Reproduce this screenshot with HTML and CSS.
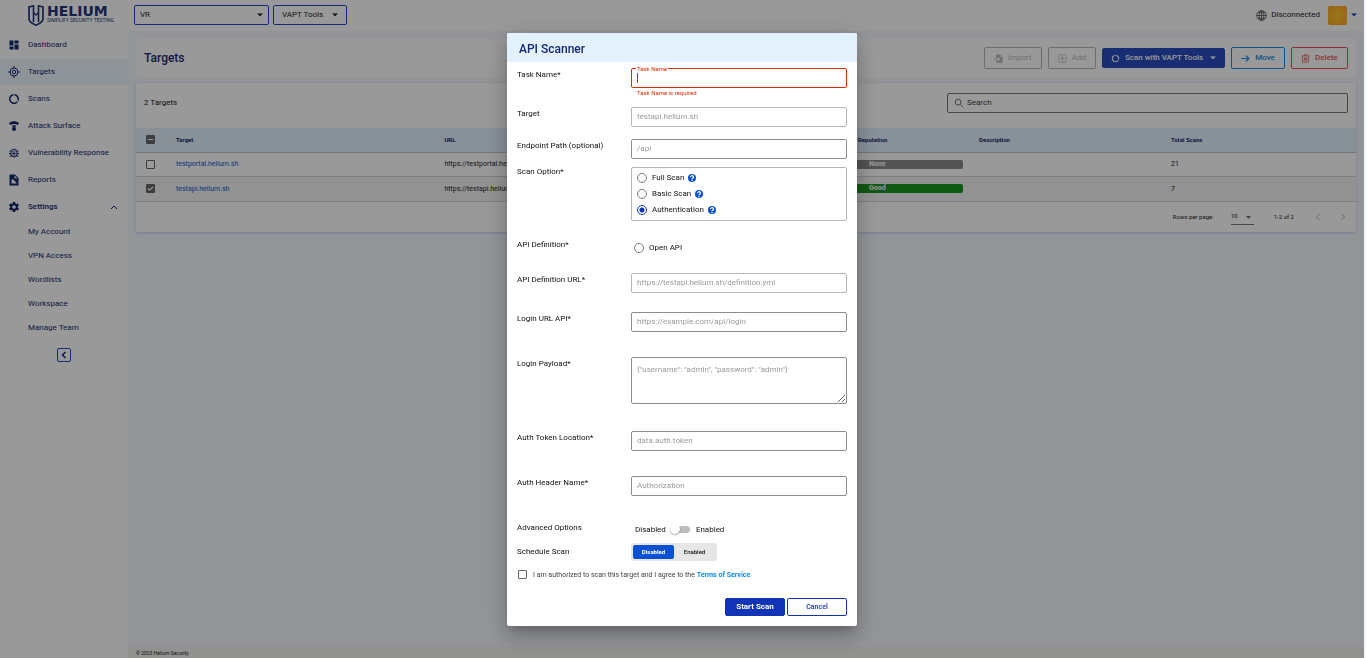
FILE: index.html
```html
<!DOCTYPE html>
<html lang="en">
<head>
<meta charset="utf-8">
<title>Helium - Targets</title>
<link rel="stylesheet" href="styles.css">
</head>
<body>
<svg class="defs" aria-hidden="true">
  <symbol id="i-ring" viewBox="0 0 24 24"><path fill="currentColor" d="M13 2.05v3.03c3.39.49 6 3.39 6 6.92 0 .9-.18 1.75-.48 2.54l2.6 1.53c.56-1.24.88-2.62.88-4.07 0-5.18-3.95-9.45-9-9.95zM12 19c-3.87 0-7-3.13-7-7 0-3.53 2.61-6.43 6-6.92V2.05c-5.06.5-9 4.76-9 9.95 0 5.52 4.47 10 9.99 10 3.31 0 6.24-1.61 8.06-4.09l-2.6-1.53C16.17 17.98 14.21 19 12 19z"/></symbol>
  <symbol id="i-down" viewBox="0 0 10 6"><path fill="currentColor" d="M0 0h10L5 5.500z"/></symbol>
  <symbol id="i-help" viewBox="0 0 24 24"><circle cx="12" cy="12" r="12" fill="#0a50d2"/><path d="M7.500 9.500a4.500 4 0 1 1 6.500 3.300c-1.300.8-2 1.200-2 2.700" fill="none" stroke="#fff" stroke-width="3.600"/><circle cx="12" cy="19.500" r="2.100" fill="#fff"/></symbol>
</svg>

<div class="app">
  <aside class="sidebar">
    <a class="logo" href="#">
      <svg class="logo-mark" viewBox="0 0 16 22" fill="none" stroke="currentColor"><path stroke-width="1.700" d="M5 2 1 3v12c0 2.500 3 4.500 7 6.200 4-1.700 7-3.700 7-6.200V3l-4-1"/><path stroke-width="1.600" d="M5.500 1v17M10.500 1v17"/><path stroke-width="1.400" d="M5.500 8.500 8 11l2.500-2.500"/></svg>
      <span class="logo-text"><span class="logo-name">HELIUM</span><span class="logo-tag">SIMPLIFY SECURITY TESTING</span></span>
    </a>
    <nav class="nav">
      <a href="#"><svg viewBox="0 0 24 24"><path fill="currentColor" d="M3 13h8V3H3v10zm0 8h8v-6H3v6zm10 0h8V11h-8v10zm0-18v6h8V3h-8z"/></svg>Dashboard</a>
      <a href="#" class="active"><svg viewBox="0 0 24 24" fill="none" stroke="currentColor" stroke-width="2"><circle cx="12" cy="12" r="8"/><circle cx="12" cy="12" r="3.500"/><path d="M12 0v4M12 20v4M0 12h4M20 12h4"/></svg>Targets</a>
      <a href="#"><svg viewBox="0 0 24 24"><use href="#i-ring"/></svg>Scans</a>
      <a href="#"><svg viewBox="0 0 24 24"><path fill="currentColor" d="M2 6c6-5 14-5 20 0l-2.500 4c-4.500-3-10.500-3-15 0zM7.500 11.500c3-1.500 6-1.500 9 0L14 15h-4z"/><circle cx="12" cy="18" r="4" fill="currentColor"/></svg>Attack Surface</a>
      <a href="#"><svg viewBox="0 0 24 24" fill="none" stroke="currentColor" stroke-width="2"><rect x="6" y="5" width="12" height="15" rx="6"/><path d="M3 8h3M2 13h4M3 18h4M18 8h3M18 13h4M17 18h4M9 10h6M9 13h6M9 16h6M8 3l2 2M16 3l-2 2"/></svg>Vulnerability Response</a>
      <a href="#"><svg viewBox="0 0 24 24"><path fill="currentColor" fill-rule="evenodd" d="M3 1h11l7 7v15H3zM13 3v6h6zM7 11v8h10v-2h-2v-3h-3v-3z"/></svg>Reports</a>
      <a href="#" class="open"><svg viewBox="0 0 24 24"><path fill="currentColor" d="M19.430 12.980c.04-.32.07-.64.07-.98s-.03-.66-.07-.98l2.110-1.650c.19-.15.24-.42.12-.64l-2-3.460c-.12-.22-.39-.3-.61-.22l-2.490 1c-.52-.4-1.080-.73-1.690-.98l-.38-2.650C14.460 2.180 14.250 2 14 2h-4c-.25 0-.46.18-.49.42l-.38 2.650c-.61.25-1.170.59-1.690.98l-2.490-1c-.23-.09-.49 0-.61.22l-2 3.460c-.13.22-.07.49.12.64l2.110 1.650c-.04.32-.07.65-.07.98s.03.66.07.98l-2.110 1.650c-.19.15-.24.42-.12.64l2 3.460c.12.22.39.3.61.22l2.490-1c.52.4 1.080.73 1.690.98l.38 2.650c.03.24.24.42.49.42h4c.25 0 .46-.18.49-.42l.38-2.650c.61-.25 1.170-.59 1.690-.98l2.490 1c.23.09.49 0 .61-.22l2-3.460c.12-.22.07-.49-.12-.64l-2.110-1.650zM12 15.500c-1.930 0-3.500-1.570-3.500-3.500s1.570-3.500 3.500-3.500 3.500 1.570 3.500 3.500-1.570 3.500-3.500 3.500z"/></svg>Settings<svg class="chev" viewBox="0 0 8 8"><path d="m1 6 3-3 3 3" fill="none" stroke="currentColor"/></svg></a>
      <div class="subnav">
        <a href="#">My Account</a><a href="#">VPN Access</a><a href="#">Wordlists</a><a href="#">Workspace</a><a href="#">Manage Team</a>
      </div>
    </nav>
    <button class="collapse" aria-label="Collapse menu"><svg viewBox="0 0 8 8"><path d="M5.500 1 2.500 4l3 3" fill="none" stroke="currentColor" stroke-width="1.500"/></svg></button>
  </aside>

  <div class="main">
    <header class="topbar">
      <div class="select-wrap"><select aria-label="Workspace"><option>VR</option></select><svg class="caret" viewBox="0 0 10 6"><use href="#i-down"/></svg></div>
      <button class="tools">VAPT Tools<svg class="caret" viewBox="0 0 10 6"><use href="#i-down"/></svg></button>
      <div class="account">
        <svg class="globe" viewBox="0 0 24 24" fill="none" stroke="currentColor" stroke-width="1.800"><circle cx="12" cy="12" r="10.500"/><ellipse cx="12" cy="12" rx="5" ry="10.500"/><path d="M12 1v22M1 12h22M3 6h18M3 18h18"/></svg>
        <span>Disconnected</span><span class="avatar"></span><svg class="caret blue" viewBox="0 0 10 6"><use href="#i-down"/></svg>
      </div>
    </header>

    <main class="content">
      <section class="title-card">
        <h1>Targets</h1>
        <button class="btn muted" disabled><svg viewBox="0 0 24 24"><path fill="currentColor" fill-rule="evenodd" d="M6 1h11l6 6v16H6v-7h5v4l6-6-6-6v4H6zM1 12h5v4H1zM16 3v5h5z"/></svg>Import</button>
        <button class="btn muted" disabled><svg viewBox="0 0 24 24" fill="none" stroke="currentColor" stroke-width="2"><rect x="2" y="2" width="20" height="20" rx="2"/><path d="M12 6v12M6 12h12"/></svg>Add</button>
        <button class="btn solid"><svg viewBox="0 0 24 24"><use href="#i-ring"/></svg>Scan with VAPT Tools<svg class="caret" viewBox="0 0 10 6"><use href="#i-down"/></svg></button>
        <button class="btn move"><svg viewBox="0 0 24 24" fill="none" stroke="currentColor" stroke-width="3"><path d="M1 12h20M13 4l8 8-8 8"/></svg>Move</button>
        <button class="btn delete"><svg viewBox="0 0 24 24" fill="none" stroke="currentColor" stroke-width="2"><path d="M2 5h20M8 4V2h8v2M4 5v17h16V5M9 9v9M12 9v9M15 9v9"/></svg>Delete</button>
      </section>

      <section class="table-card">
        <div class="table-head">
          <span>2 Targets</span>
          <label class="search"><svg viewBox="0 0 12 12" fill="none" stroke="currentColor"><circle cx="5" cy="5" r="3.500"/><path d="m8 8 3 3"/></svg><input type="text" placeholder="Search" aria-label="Search"></label>
        </div>
        <table>
          <colgroup><col class="c-check"><col class="c-target"><col class="c-url"><col class="c-rep"><col class="c-desc"><col class="c-total"></colgroup>
          <thead><tr><th><input type="checkbox" class="check mixed" aria-label="Select all"></th><th>Target</th><th>URL</th><th>Reputation</th><th>Description</th><th>Total Scans</th></tr></thead>
          <tbody>
            <tr><td><input type="checkbox" class="check" aria-label="Select testportal.helium.sh"></td><td><a href="#">testportal.helium.sh</a></td><td>https://testportal.helium.sh</td><td><span class="rep none">None</span></td><td></td><td>21</td></tr>
            <tr class="picked"><td><input type="checkbox" class="check" checked aria-label="Select testapi.helium.sh"></td><td><a href="#">testapi.helium.sh</a></td><td>https://testapi.helium.sh</td><td><span class="rep good">Good</span></td><td></td><td>7</td></tr>
          </tbody>
        </table>
        <div class="pager">
          <label for="rows">Rows per page:</label>
          <div class="rows"><select id="rows"><option>10</option></select><svg class="caret" viewBox="0 0 10 6"><use href="#i-down"/></svg></div>
          <span class="range">1-2 of 2</span>
          <button disabled aria-label="Previous page"><svg viewBox="0 0 8 8"><path d="M5.500 1 2.500 4l3 3" fill="none" stroke="currentColor"/></svg></button>
          <button disabled aria-label="Next page"><svg viewBox="0 0 8 8"><path d="m2.500 1 3 3-3 3" fill="none" stroke="currentColor"/></svg></button>
        </div>
      </section>
    </main>
    <footer class="footer">© 2023 Helium Security</footer>
  </div>
</div>

<div class="backdrop">
  <form class="modal" role="dialog" aria-labelledby="dlg-title">
    <h2 id="dlg-title">API Scanner</h2>
    <div class="fields">
      <div class="row error"><label class="name" for="task">Task Name*</label>
        <div class="outlined"><input id="task" class="field" type="text"><span class="float">Task Name</span><span class="cursor"></span><span class="hint">Task Name is required</span></div></div>
      <div class="row tight"><label class="name" for="target">Target</label><input id="target" class="field light" type="text" placeholder="testapi.helium.sh"></div>
      <div class="row snug"><label class="name" for="path">Endpoint Path (optional)</label><input id="path" class="field" type="text" placeholder="/api"></div>
      <div class="row options"><span class="name">Scan Option*</span>
        <div class="radio-box">
          <label><input type="radio" name="scan">Full Scan<svg viewBox="0 0 24 24"><use href="#i-help"/></svg></label>
          <label><input type="radio" name="scan">Basic Scan<svg viewBox="0 0 24 24"><use href="#i-help"/></svg></label>
          <label><input type="radio" name="scan" checked>Authentication<svg viewBox="0 0 24 24"><use href="#i-help"/></svg></label>
        </div></div>
      <div class="row"><span class="name">API Definition*</span><label class="single"><input type="radio" name="def">Open API</label></div>
      <div class="row"><label class="name" for="defurl">API Definition URL*</label><input id="defurl" class="field light" type="text" placeholder="https://testapi.helium.sh/definition.yml"></div>
      <div class="row roomy"><label class="name" for="login">Login URL API*</label><input id="login" class="field" type="text" placeholder="https://example.com/api/login"></div>
      <div class="row payload"><label class="name" for="payload">Login Payload*</label><textarea id="payload" class="field" placeholder="{&quot;username&quot;: &quot;admin&quot;, &quot;password&quot;: &quot;admin&quot;}"></textarea></div>
      <div class="row roomy"><label class="name" for="token">Auth Token Location*</label><input id="token" class="field" type="text" placeholder="data.auth.token"></div>
      <div class="row roomy"><label class="name" for="header">Auth Header Name*</label><input id="header" class="field" type="text" placeholder="Authorization"></div>
      <div class="row advanced"><span class="name">Advanced Options</span><label class="toggle">Disabled<input type="checkbox" aria-label="Advanced options">Enabled</label></div>
      <div class="row schedule"><span class="name">Schedule Scan</span><div class="segmented"><button type="button" class="on">Disabled</button><button type="button">Enabled</button></div></div>
      <div class="agree"><input type="checkbox" id="agree" class="check"><label for="agree">I am authorized to scan this target and I agree to the <a href="#">Terms of Service</a></label></div>
    </div>
    <div class="actions"><button type="button" class="start">Start Scan</button><button type="button" class="cancel">Cancel</button></div>
  </form>
</div>
</body>
</html>
```
FILE: styles.css
```css
* { box-sizing: border-box; }
body { margin: 0; background: #f5f7fd; color: #222; font: 8px/12px Roboto, "Liberation Sans", sans-serif; }
button, input, select, textarea { font: inherit; color: inherit; margin: 0; }
button { cursor: pointer; }
a { text-decoration: none; }
svg { display: block; flex: none; }
.defs { position: absolute; width: 0; height: 0; }
.caret { width: 6px; height: 4px; }
.blue { color: #1840b8; }

.app { display: flex; min-height: 100vh; padding-right: 2px; }
.sidebar { width: 128px; flex: none; background: #fff; color: #14296f; }
.logo { display: flex; gap: 3px; height: 31px; padding: 4px 0 0 28px; color: #23357c; }
.logo-mark { width: 16px; height: 22px; }
.logo-text { display: flex; flex-direction: column; }
.logo-name { font: bold 14px/14px "DejaVu Sans", sans-serif; }
.logo-tag { font-size: 5px; line-height: 5px; font-weight: 400; white-space: nowrap; }
.nav > a { display: flex; align-items: center; gap: 8px; height: 27px; padding: 0 10px 0 8px; color: inherit; }
.nav > a svg { width: 12px; height: 12px; }
.nav > a.active { background: #edf6fd; }
.nav > a.open { font-weight: 500; }
.nav > a svg.chev { width: 8px; height: 8px; margin-left: auto; }
.subnav { display: flex; flex-direction: column; }
.subnav a { height: 24px; padding-left: 28px; line-height: 24px; color: inherit; }
.collapse { display: grid; place-items: center; width: 14px; height: 14px; margin: 8px auto 0; padding: 0; background: none; border: 1px solid #2448c4; border-radius: 2px; }
.collapse svg { width: 8px; height: 8px; }

.main { flex: 1; min-width: 0; display: flex; flex-direction: column; }
.topbar { display: flex; align-items: center; gap: 4px; height: 31px; padding: 0 7px 1px 6px; background: #fff; }
.select-wrap { position: relative; width: 135px; }
.select-wrap select { display: block; width: 100%; height: 20px; padding: 0 5px; appearance: none; background: none; border: 1px solid #2448c4; border-radius: 2px; }
.select-wrap .caret { position: absolute; right: 6px; top: 8px; }
.tools { display: flex; align-items: center; justify-content: space-between; width: 74px; height: 20px; padding: 0 8px; background: none; border: 1px solid #2448c4; border-radius: 2px; }
.account { display: flex; align-items: center; gap: 4px; margin-left: auto; }
.globe { width: 11px; height: 11px; color: #555; }
.avatar { width: 19px; height: 19px; margin: 0 0 0 4px; border-radius: 2px; background: radial-gradient(#ffc832, #fda51d); }

.content { flex: 1; display: flex; flex-direction: column; gap: 6px; padding: 8px; }
.title-card { display: flex; align-items: center; gap: 6px; height: 38px; padding: 0 8px; background: #fff; border-radius: 2px; }
h1 { margin: 0 auto 0 0; font-size: 12px; line-height: 16px; font-weight: 500; color: #14296f; }
.btn { display: flex; align-items: center; justify-content: center; gap: 5px; height: 22px; padding: 0 9px; background: none; border: 1px solid; border-radius: 2px; font-weight: 500; }
.btn svg { width: 9px; height: 9px; }
.btn .caret { width: 6px; height: 4px; margin-left: 2px; }
.muted { min-width: 48px; color: #b8b8b8; font-weight: 400; }
.muted:first-of-type { min-width: 58px; }
.solid { min-width: 123px; height: 20px; padding: 0 7px; background: #2b4bc0; border-color: #2b4bc0; color: #fff; }
.move { min-width: 54px; color: #1d8ae0; }
.delete { min-width: 57px; color: #e4555a; }

.table-card { background: #fff; border-radius: 2px; box-shadow: 0 1px 3px #c9cdf0; }
.table-head { display: flex; justify-content: space-between; align-items: flex-start; height: 45px; padding: 10px 8px 0; }
.table-head > span { padding-top: 4px; }
.search { display: flex; align-items: center; gap: 3px; flex: 0 1 401px; height: 20px; padding: 0 6px; border: 1px solid #777; border-radius: 2px; color: #555; }
.search svg { width: 10px; height: 10px; }
.search input { flex: 1; min-width: 0; padding: 0; border: 0; background: none; outline: 0; }
.search input::placeholder { color: #444; opacity: 1; }
table { width: 100%; border-collapse: collapse; table-layout: fixed; font-size: 7px; }
.c-check { width: 30px; }
.c-target { width: 22%; }
.c-rep { width: 121px; }
.c-desc { width: 192px; }
.c-total { width: 195px; }
th, td { height: 24px; padding: 0 0 0 10px; text-align: left; border-bottom: 1px solid #d5d5d5; }
th { font-size: 6px; font-weight: 700; background: #e3f1fd; color: #14296f; border-color: #bccbd8; }
td a { color: #1258c8; }
.picked { background: #f4f4f4; }
.picked td { height: 25px; }
.check { display: block; appearance: none; width: 9px; height: 9px; border: 1px solid #666; border-radius: 1px; background: #fff; }
.check:checked, .check.mixed { background: #666 center / 7px 7px no-repeat; }
.check:checked { background-image: url("data:image/svg+xml,%3Csvg xmlns='http://www.w3.org/2000/svg' viewBox='0 0 8 8'%3E%3Cpath d='M1 4l2 2 4-4' fill='none' stroke='white' stroke-width='1.300'/%3E%3C/svg%3E"); }
.check.mixed { background-image: url("data:image/svg+xml,%3Csvg xmlns='http://www.w3.org/2000/svg' viewBox='0 0 8 8'%3E%3Cpath d='M1 4h6' stroke='white' stroke-width='1.300'/%3E%3C/svg%3E"); }
.rep { display: block; width: 113px; height: 9px; margin-left: -8px; padding-left: 19px; border-radius: 2px; color: #fff; font-weight: 700; line-height: 8px; }
.none { background: #8b8b8b; }
.good { background: #1b951e; }
.pager { display: flex; align-items: center; justify-content: flex-end; height: 30px; padding: 0 9px; font-size: 6px; }
.rows { position: relative; width: 23px; margin: 0 20px 0 17px; }
.rows select { display: block; width: 100%; height: 16px; padding: 0; appearance: none; background: none; border: 0; border-bottom: 1px solid #777; border-radius: 0; }
.rows .caret { position: absolute; right: 3px; top: 7px; width: 5px; height: 3px; color: #666; }
.range { margin-right: 20px; }
.pager button { padding: 0; border: 0; background: none; color: #aaa; }
.pager button + button { margin-left: 17px; }
.pager svg { width: 8px; height: 8px; }
.footer { height: 12px; padding-left: 8px; font-size: 5px; line-height: 14px; background: #f2f2f0; }

.backdrop { position: fixed; inset: 0 2px 0 0; display: flex; align-items: center; justify-content: center; background: rgba(0, 0, 0, .4); }
.modal { width: 350px; background: #fff; border-radius: 2px; color: #111; box-shadow: 0 6px 8px -4px rgba(0, 0, 0, .2), 0 12px 19px 1px rgba(0, 0, 0, .14), 0 4px 23px 4px rgba(0, 0, 0, .12); overflow: hidden; }
h2 { margin: 0; padding: 3px 12px 0; font-size: 12px; line-height: 26px; font-weight: 500; color: #14296f; background: #e3f1fd; }
.fields { padding: 6px 10px 0; }
.row { display: grid; grid-template-columns: 114px 1fr; align-items: start; margin-bottom: 19px; }
.name { padding-top: 1px; }
.row.tight { margin-bottom: 12px; }
.row.snug { margin-bottom: 6px; }
.row.options { margin-bottom: 17px; }
.row.roomy { margin-bottom: 25px; }
.row.payload { margin-bottom: 27px; }
.row.advanced { margin-bottom: 7px; }
.field { display: block; width: 100%; height: 20px; padding: 0 5px; border: 1px solid #8c8c8c; border-radius: 2px; background: #fff; outline: 0; }
.field.light { border-color: #b5b5b5; }
.field::placeholder { color: #9a9a9a; opacity: 1; }
textarea.field { height: 47px; padding-top: 6px; resize: vertical; }
.outlined { position: relative; }
.error .field { border-color: #dd2c00; }
.float { position: absolute; left: 5px; top: -3px; padding: 0 1px; background: #fff; color: #dd2c00; font-size: 6px; line-height: 8px; }
.cursor { position: absolute; left: 6px; top: 5px; width: 1px; height: 10px; background: #dd2c00; }
.hint { position: absolute; left: 6px; top: 21px; color: #dd2c00; font-size: 6px; line-height: 8px; }
.radio-box { display: flex; flex-direction: column; margin-top: 2px; padding: 2px 5px; border: 1px solid #b5b5b5; border-radius: 2px; }
.radio-box label, .single { display: flex; align-items: center; gap: 5px; height: 16px; }
.radio-box svg { width: 8px; height: 8px; margin-left: -1px; }
input[type="radio"] { appearance: none; width: 10px; height: 10px; border: 1px solid #777; border-radius: 50%; }
input[type="radio"]:checked { border-color: #1034b5; background: radial-gradient(#1034b5 2px, #fff 3px); }
.single { padding: 4px 0 0 3px; }
.toggle { display: flex; align-items: center; gap: 6px; padding: 3px 0 0 4px; }
.toggle input { appearance: none; position: relative; width: 18px; height: 7px; border-radius: 4px; background: #bdbdbd; }
.toggle input::before { content: ""; position: absolute; left: -2px; top: -2px; width: 10px; height: 10px; border-radius: 50%; background: #fff; box-shadow: 0 1px 2px rgba(0, 0, 0, .35); }
.row.schedule { align-items: center; margin-bottom: 8px; }
.segmented { display: flex; justify-self: start; padding: 2px; background: #e6e6e6; border-radius: 2px; }
.segmented button { width: 41px; height: 14px; padding: 0; border: 0; border-radius: 2px; background: none; font-size: 6px; font-weight: 500; line-height: 14px; }
.segmented .on { background: #0a50d2; color: #fff; font-weight: 700; }
.agree { display: flex; align-items: center; gap: 6px; padding-left: 1px; font-size: 7px; color: #444; }
.agree a { color: #0d8bf0; font-weight: 700; }
.actions { display: flex; justify-content: flex-end; gap: 2px; padding: 17px 10px 10px; }
.actions button { width: 60px; height: 18px; padding: 0; border: 1px solid #1034b5; border-radius: 2px; font-size: 7px; }
.actions .start { background: #1034b5; color: #fff; font-size: 8px; font-weight: 700; }
.cancel { background: #fff; color: #1034b5; font-weight: 500; }
```
